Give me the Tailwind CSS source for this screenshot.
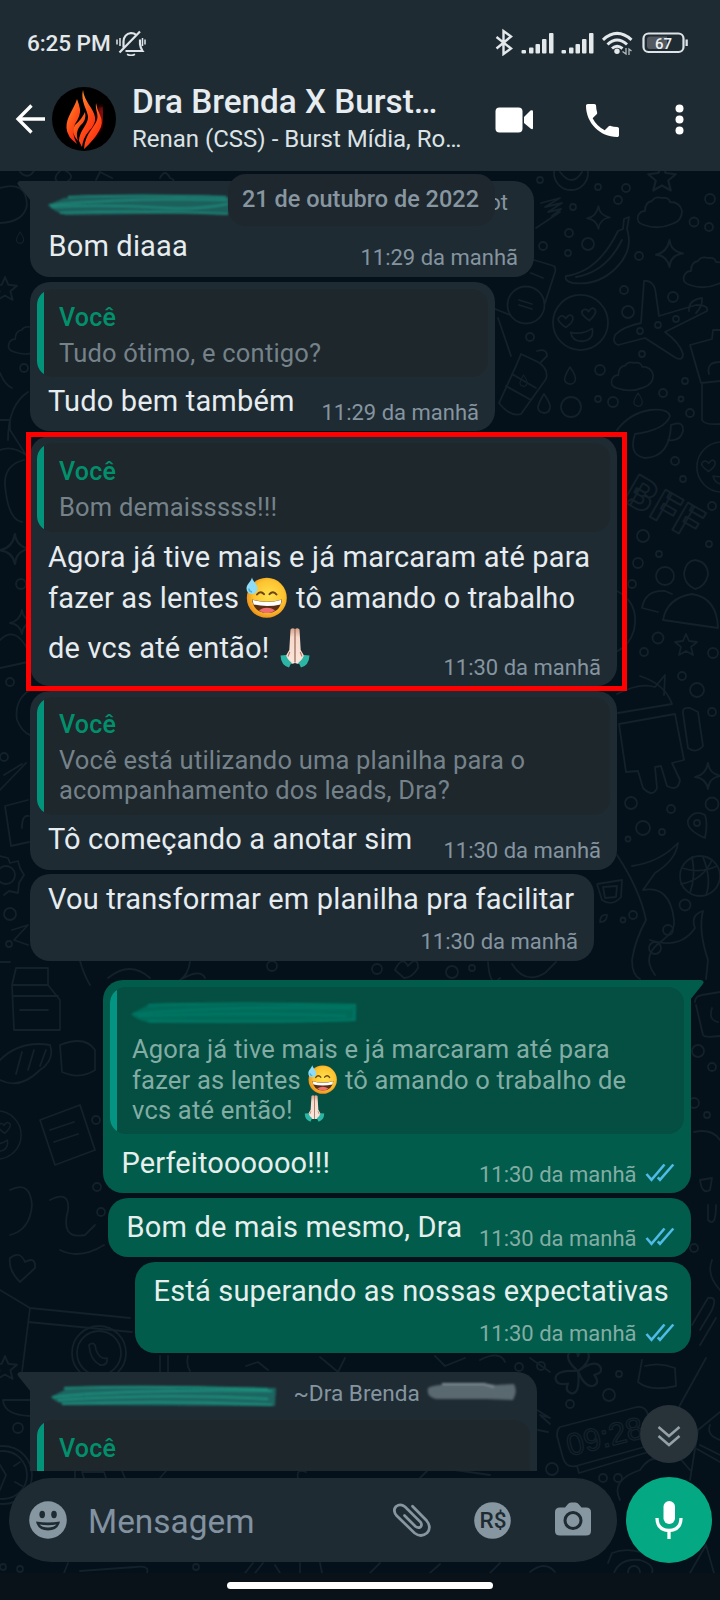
<!DOCTYPE html>
<html lang="pt">
<head>
<meta charset="utf-8">
<title>Dra Brenda X Burst</title>
<script src="https://cdn.jsdelivr.net/npm/@tailwindcss/browser@4"></script>
</head>
<body class="bg-[#0a1219]">
<svg class="absolute size-0">
  <defs>
    <radialGradient id="skin" cx=".55" cy=".45" r=".55"><stop offset="0" stop-color="#ffe14f"/><stop offset=".7" stop-color="#fdc32f"/><stop offset="1" stop-color="#f0951d"/></radialGradient>
    <linearGradient id="hand" x1="0" x2="0" y1="0" y2="1"><stop offset="0" stop-color="#d9a28c"/><stop offset=".25" stop-color="#f6d9ca"/><stop offset="1" stop-color="#fbe6dc"/></linearGradient>
    <symbol id="sweat" viewBox="0 0 41 41">
      <circle cx="20.8" cy="20.8" r="20" fill="url(#skin)"/>
      <path d="M6 22.5Q21 27 36 22.5Q34 36 21 36Q8 36 6 22.5Z" fill="#5b2f14"/>
      <path d="M6.5 22.8Q21 27.2 35.5 22.8L34.6 27.5Q21 30.5 7.6 27.5Z" fill="#fff"/>
      <path d="M13 33.2Q21 28.5 29 33.2Q26 36 21 36Q16 36 13 33.2Z" fill="#ef6f70"/>
      <path d="M11 17.5Q14.500 13 18 17.200M23.500 17.200Q27 13 30.500 17.500" fill="none" stroke="#6b4314" stroke-width="2" stroke-linecap="round"/>
      <path d="M6 0.500C7 5 11.500 7 11.500 11.500A5.500 5.500 0 0 1 0.500 11.500C0.500 7 5 5 6 0.500Z" fill="#8fdcf6"/>
      <path d="M3 11.500A3.500 3.500 0 0 0 6 15" stroke="#4aaede" stroke-width="1.500" fill="none"/>
    </symbol>
    <symbol id="pray" viewBox="0 0 30 40">
      <path d="M10.500 1.500Q12.500-.5 14.800 1V35Q11 37 7.500 33L5.500 28.500L9.300 22Z" fill="url(#hand)"/>
      <path d="M19.500 1.500Q17.500-.5 15.200 1V35Q19 37 22.500 33L24.500 28.500L20.700 22Z" fill="url(#hand)"/>
      <path d="M15 1.500V34M9.800 24L8 28.500M20.200 24L22 28.500" stroke="#b27964" stroke-width="1.100" fill="none"/>
      <path d="M.5 27.500L6 27Q7.500 32 11.500 34.500L9 39.500Q1 37.500 .5 27.500Z" fill="#2cb5a4"/>
      <path d="M29.500 27.500L24 27Q22.500 32 18.500 34.500L21 39.500Q29 37.500 29.500 27.500Z" fill="#2cb5a4"/>
    </symbol>
    <symbol id="ticks" viewBox="0 0 30 19"><path d="M1.500 11L6.500 16.800L19.500 1.500M12.800 14.300L15 16.800L28.300 1.500" fill="none" stroke="#4fbbe6" stroke-width="2.600"/></symbol>
    <filter id="soft" x="-5%" y="-30%" width="110%" height="160%"><feGaussianBlur stdDeviation="1.300"/></filter>
    <symbol id="cloud" viewBox="0 0 48 34" overflow="visible"><path d="M8 29Q0 27 2 20Q4 15 9 15Q9 6 16 5Q19 0 26 2Q33 1 34 6Q44 6 46 15Q46 25 36 28Q22 34 8 29Z"/></symbol>
    <symbol id="spark" viewBox="0 0 24 24" overflow="visible"><path d="M12 0Q13 10 24 12Q13 13 12 24Q10 14 0 13Q10 11 12 0Z"/></symbol>
    <symbol id="star" viewBox="0 0 24 24" overflow="visible"><path d="M12 1L15 8L23 9L17 14L19 22L12 18L5 22L7 14L1 9L9 8Z"/></symbol>
    <symbol id="drop" viewBox="0 0 14 20" overflow="visible"><path d="M7 0Q14 10 13 14Q12 19 7 19Q1 18 1 13Q2 8 7 0Z"/></symbol>
    <symbol id="love" viewBox="0 0 58 58" overflow="visible"><circle cx="29" cy="29" r="28"/><path d="M14 34Q4 27 7 24Q11 20 14 25Q18 19 21 23Q23 28 14 34ZM38 27Q28 20 31 17Q35 14 37 18Q41 12 44 16Q46 20 38 27ZM19 39Q31 42 41 35Q43 46 32 48Q21 49 19 39Z"/></symbol>
    <symbol id="flower" viewBox="0 0 40 40" overflow="visible"><path d="M20 20Q8 10 14 4Q19 2 20 8Q23 0 28 5Q31 12 20 20Q34 10 38 17Q40 22 33 23Q38 30 32 32Q25 33 20 20Q22 38 15 38Q9 36 12 30Q3 32 2 26Q2 19 20 20"/></symbol>
  </defs>
</svg>

<div class="w-[720px] h-[1600px] flex flex-col overflow-hidden bg-[#0a1219] font-[Roboto,sans-serif]">

  <!-- status bar and chat header -->
  <header class="h-[171px] shrink-0 bg-[#1f2b33] flex flex-col">
    <div class="h-[78px] pt-[28px] pl-[27px] pr-[32px] flex items-start">
      <span class="text-[22.6px] leading-[30px] mt-[1px] font-medium text-[#e3e8eb] whitespace-nowrap tracking-[-0.1px]">6:25 PM</span>
      <svg class="ml-[5px] mt-[2px]" width="30" height="26" viewBox="0 0 30 26" fill="none" stroke="#dfe5e8" stroke-width="2.200">
        <path d="M7.500 17.500V11.500Q8 4 15 3Q18 3 20.500 5M24 9.500V14Q24.500 18 26.500 21H9.500M3.500 22.500L24 1.500"/><path d="M11 24.300Q15 26.500 19 24.300" stroke-width="1.800"/><path d="M1 9.500V14.500M4 8V16M26.500 8V16M29 9.500V14.500" stroke-width="1.500"/>
      </svg>
      <svg class="ml-auto" width="194" height="28" viewBox="494 28 194 28">
        <path d="M496.500 37L511 48.500L503.500 54V31L511 36.500L496.500 48.500" fill="none" stroke="#e3e8eb" stroke-width="2.400"/>
        <g fill="#e3e8eb"><rect x="521.500" y="50" width="4.500" height="3.500" rx="1"/><rect x="529" y="47.500" width="4.500" height="6" rx="1"/><rect x="535.500" y="44" width="4.500" height="9.500" rx="1"/><rect x="542" y="39" width="4.500" height="14.500" rx="1"/><rect x="549" y="33" width="4.500" height="20.500" rx="1"/></g>
        <g fill="#e3e8eb"><rect x="561.500" y="50" width="4.500" height="3.500" rx="1"/><rect x="569" y="47.500" width="4.500" height="6" rx="1"/><rect x="575.500" y="44" width="4.500" height="9.500" rx="1"/><rect x="582" y="39" width="4.500" height="14.500" rx="1"/><rect x="589" y="33" width="4.500" height="20.500" rx="1"/></g>
        <g fill="none" stroke="#e3e8eb" stroke-width="3"><path d="M603 39.800Q617 27 631.500 39.800M607.500 44.500Q617 35.500 627 44.500M612 48.500Q617 44 622.500 48.500"/></g>
        <circle cx="617" cy="51.300" r="2.700" fill="#e3e8eb"/><path d="M626 48V54L622.500 51.500M629 55V49L631.500 51" fill="none" stroke="#b5bdc2" stroke-width="1.300"/>
        <rect x="643.500" y="33.500" width="40" height="18.500" rx="5" fill="none" stroke="#dde3e6" stroke-width="2.200"/>
        <path d="M650 36.500H667V49H650Q647 49 647 46V39.500Q647 36.500 650 36.500Z" fill="#53595f"/><rect x="685.500" y="39.500" width="2.300" height="6.500" fill="#dde3e6"/>
        <text x="655" y="48.600" font-size="15.500" font-weight="500" fill="#eef1f3" textLength="17" lengthAdjust="spacingAndGlyphs">67</text>
      </svg>
    </div>
    <div class="h-[84px] flex items-center pl-[15px] relative">
      <svg width="31" height="30" viewBox="0 0 31 30" fill="none" stroke="#fff" stroke-width="3.300" class="mt-[-2px]"><path d="M30 15H3M16.500 1.500L3 15L16.500 28.500"/></svg>
      <svg class="ml-[6px] mt-[-2px]" width="64" height="64" viewBox="0 0 64 64">
        <defs><linearGradient id="fl" x1=".2" y1="0" x2=".8" y2="1"><stop offset="0" stop-color="#ff8a2a"/><stop offset=".55" stop-color="#ff4a16"/><stop offset="1" stop-color="#ff1d12"/></linearGradient><filter id="glow"><feGaussianBlur stdDeviation="2"/></filter></defs>
        <circle cx="32" cy="32" r="32" fill="#000"/>
        <path d="M49 20Q51 30 46 40L38 50" stroke="#b30b08" stroke-width="5" fill="none" filter="url(#glow)"/>
        <g fill="url(#fl)"><path d="M25 12C22 22 14 30 14.500 41Q15 50 25 57Q19 46 23 37Q29 28 28 22Q27 17 25 12Z"/><path d="M31 3C28 14 36 24 36 30C36 38 27 44 27 54L30 60Q31 51 37 44Q44 37 43 30C42 22 32 14 31 3Z"/><path d="M44 16C43 24 47 27 45 33C42 41 33 47 32 62Q42 53 47 44Q52 36 48 28Q45 22 44 16Z"/><path d="M33 25Q35 33 28 39Q23 45 26 54Q18 45 23 38Q30 32 33 25Z"/></g>
      </svg>
      <div class="ml-[16px] flex flex-col w-[340px] mt-[1px]">
        <span class="text-[33.3px] leading-[36px] font-medium text-[#e6ecef] whitespace-nowrap">Dra Brenda X Burst…</span>
        <span class="text-[24px] leading-[36px] mt-[1px] text-[#dce3e6] whitespace-nowrap">Renan (CSS) - Burst Mídia, Ro…</span>
      </div>
      <svg class="absolute left-[495px] top-[26px]" width="38" height="29" viewBox="0 0 38 29" fill="#fff"><rect x=".5" y="3.500" width="27" height="25" rx="4"/><path d="M29 13L35.500 6.500Q38 5.500 38 7.500V24Q38 26 35.500 24.500L29 19Z"/></svg>
      <svg class="absolute left-[586px] top-[26px]" width="33" height="33" viewBox="3 3 18 18" fill="#fff"><path d="M6.620 10.790c1.440 2.830 3.760 5.140 6.590 6.590l2.200-2.200c.27-.27.67-.36 1.020-.24 1.120.37 2.330.57 3.570.57.55 0 1 .45 1 1V20c0 .55-.45 1-1 1-9.390 0-17-7.610-17-17 0-.55.45-1 1-1h3.500c.55 0 1 .45 1 1 0 1.250.2 2.450.57 3.570.11.35.03.74-.25 1.020l-2.200 2.200z"/></svg>
      <svg class="absolute left-[674px] top-[26px]" width="11" height="32" viewBox="0 0 11 32" fill="#fff"><circle cx="5.500" cy="4.500" r="4"/><circle cx="5.500" cy="15.500" r="4"/><circle cx="5.500" cy="26.500" r="4"/></svg>
    </div>
  </header>

  <main class="relative h-[1402px] shrink-0 flex flex-col bg-[#05111a]">
    <!-- doodle wallpaper -->
    <svg class="absolute inset-0" width="720" height="1402" viewBox="0 171 720 1402" fill="none" stroke="#13212a" stroke-width="1.800" stroke-linejoin="round" stroke-linecap="round">
      <path d="M541 203L560 198L545 207L562 203L548 212L561 209L552 216M536 228L560 212"/>
      <use href="#spark" x="587" y="206" width="23" height="23"/><circle cx="571" cy="173" r="17"/><path d="M560 172Q572 188 582 172"/>
      <use href="#star" x="647" y="163" width="30" height="30"/><use href="#cloud" x="636" y="196" width="48" height="34"/>
      <use href="#spark" x="656" y="240" width="27" height="27"/><use href="#cloud" x="682" y="256" width="48" height="34"/>
      <path d="M566 276Q598 272 618 231L623 229L624 219L629 217L627 229Q634 250 616 268Q598 286 573 283Q564 281 566 276ZM576 277Q606 272 622 240"/>
      <path d="M534 260L554 266Q556 268 555 272L545 303M531 273L543 278M510 315L495 309M511 356L498 318"/><circle cx="526" cy="305" r="18.500"/><path d="M519 300L532 304M519 305L532 309"/>
      <use href="#love" x="552" y="294" width="57" height="57"/>
      <path d="M644 281Q655 280 656 295L659 316L696 305Q709 305 707 311L665 332Q680 343 683 354Q683 361 676 358L645 338L618 345Q612 343 615 335Q622 327 641 323ZM689 311Q688 300 702 298Q703 306 696 313"/>
      <path d="M521 354L538 362Q549 369 546 379L521 414Q510 417 499 403L516 366ZM537 351Q547 348 547 356L541 362M512 374L536 388M506 386L531 400"/><use href="#drop" x="519" y="375" width="9" height="12"/>
      <use href="#drop" x="563" y="367" width="14" height="18" /><use href="#drop" x="537" y="394" width="14" height="20"/><circle cx="571" cy="407" r="10"/>
      <use href="#cloud" x="609" y="361" width="47" height="32"/><use href="#drop" x="633" y="393" width="10" height="14"/>
      <path d="M720 330L713 330L712 339L690 345L701 383L720 381M702 383V420Q704 425 720 424M709 374Q706 362 720 362"/>
      <path d="M617 430Q630 413 650 410Q668 408 670 416Q665 430 635 434Q628 455 645 458Q670 457 671 425M671 425Q684 420 683 431Q680 442 668 440"/>
      <use href="#love" x="696" y="441" width="52" height="52"/>
      <g font-family="Roboto" font-weight="900" font-size="44" transform="rotate(30 625 500)"><text x="622" y="502" letter-spacing="2">BFF</text></g>
      <circle cx="665" cy="576" r="9"/><path d="M695 560Q708 562 708 575Q705 587 695 589Q684 584 684 573Q686 561 695 560ZM663 620Q667 598 692 594Q717 598 718 628ZM658 612L642 608Q645 590 665 591L672 594M615 590Q640 602 634 630Q630 645 616 652"/>
      <use href="#star" x="674" y="633" width="24" height="24"/><path d="M617 694Q640 682 655 687L665 675L664 695"/>
      <path d="M619 724L675 714L684 760L672 763L680 780Q678 792 667 786L661 766L655 767L657 788Q653 798 643 788L638 771L626 772ZM618 713L672 704Q665 684 640 676M683 713Q682 707 690 708L698 712L703 746Q696 754 688 748Z"/>
      <use href="#spark" x="695" y="762" width="26" height="28"/><path d="M705 838Q686 830 688 820Q694 809 705 815Q708 823 705 838Z"/><circle cx="697" cy="823" r="3"/>
      <circle cx="700" cy="876" r="20"/><path d="M682 868Q700 874 717 866M690 893Q696 876 692 857M681 884Q703 880 712 860M706 895Q712 880 703 857"/>
      <path d="M617 855Q640 890 646 920Q635 940 632 960Q632 975 640 979M632 866Q660 862 678 843Q676 860 655 873L643 890Q670 885 674 920Q676 930 663 940Q640 955 655 975M650 940Q680 950 695 928Q690 915 703 911Q698 930 708 960L706 979"/><circle cx="668" cy="930" r="5"/><circle cx="655" cy="948" r="6"/>
      <path d="M597 884L622 880L621 897Q612 907 602 900ZM603 887L617 886L616 897L605 898Z"/><path d="M600 922Q600 914 607 915Q607 922 600 922"/>
      <path d="M488 962Q490 990 500 978M512 964Q525 985 545 973L556 962M395 970Q402 955 408 966Q418 955 418 968Q412 978 404 978Z"/>
      <!-- left edge -->
      <path d="M0 188Q26 180 27 205Q24 222 0 223"/><use href="#drop" x="15" y="232" width="10" height="12"/><use href="#star" x="-8" y="276" width="26" height="26"/><use href="#cloud" x="7" y="325" width="44" height="32"/>
      <path d="M28 392Q8 405 8 440M0 373Q5 385 12 388M0 420L10 420V430M10 430L26 455M24 460Q4 465 5 485Q8 520 22 522M26 455Q12 445 0 450"/>
      <use href="#spark" x="0" y="532" width="30" height="34"/><use href="#spark" x="10" y="610" width="24" height="24"/><path d="M0 640Q15 625 28 650M0 668L28 662M30 690Q14 700 17 720Q22 732 30 735M0 790L26 763M4 775L22 764M28 800L5 806L11 846L29 842M22 828Q22 814 29 816"/>
      <circle cx="6" cy="875" r="9"/><path d="M0 856L8 858L10 863L18 861L20 868L24 875L19 883L18 893L9 891L4 895"/><path d="M12 930L28 925L14 940L28 945M0 962L10 962M80 961Q84 975 90 985M108 978Q130 960 150 978M190 962Q188 975 180 980Q200 968 205 978"/>
      <path d="M12 985L16 968H48V985M12 985H48L60 1000V1030H14ZM14 996H58M20 1010H48M60 1045Q85 1035 95 1050V1070Q80 1080 62 1072ZM0 1060Q20 1040 50 1045Q55 1060 40 1070Q20 1090 0 1080M46 1050L40 1066M34 1050L28 1070M22 1052L16 1074"/>
      <path d="M40 1120L80 1105L95 1150L55 1165ZM50 1130L74 1122M54 1142L78 1134"/><use href="#love" x="-28" y="1110" width="50" height="50"/>
      <path d="M10 1190Q30 1180 32 1205Q30 1230 10 1235M50 1200Q70 1190 68 1210Q60 1240 85 1235L95 1225M60 1250Q80 1260 104 1245M10 1258Q20 1250 25 1262Q36 1256 35 1268L20 1282Q8 1270 10 1258"/>
      <path d="M30 1308L130 1318M28 1322L132 1332M30 1308L22 1372M0 1290L30 1308"/><circle cx="99" cy="1353" r="27"/><circle cx="99" cy="1353" r="22"/><path d="M89 1345Q95 1340 96 1350Q100 1360 107 1358Q108 1366 100 1365Q90 1360 89 1345"/>
      <path d="M160 1356V1372M168 1356V1372M188 1356Q186 1365 190 1371M246 1366L258 1362L268 1370M320 1357L338 1372L345 1358"/><use href="#star" x="-8" y="1355" width="26" height="26"/><path d="M3 1400H30M3 1400Q4 1415 30 1416"/>
      <circle cx="3" cy="1475" r="29"/><circle cx="3" cy="1475" r="24"/><path d="M0 1465L6 1475L0 1490M20 1462L14 1466M22 1486L15 1482"/>
      <!-- lower gap and right strip -->
      <path d="M75 1478V1471M84 1478L82 1472H104L106 1478M125 1478L122 1471M160 1478L166 1471M298 1478Q296 1468 306 1472M420 1478L428 1470H455L490 1475"/>
      <path d="M80 1571L135 1567Q150 1565 147 1573M68 1563L64 1573M245 1573L253 1563M255 1573L263 1563M275 1565L280 1573M300 1563V1573M320 1563L322 1573M370 1573L380 1563M430 1573L440 1564M500 1563L490 1573M530 1572Q545 1560 555 1572"/>
      <path d="M695 1002Q695 996 702 995L720 992M696 1005L703 1035Q705 1038 720 1036M712 1008Q708 1020 718 1022M694 1132Q712 1128 720 1140M700 1180L712 1178L710 1190Q702 1195 700 1180M708 1205V1220Q716 1228 716 1205M712 1260Q706 1275 720 1290M692 1325L708 1298Q718 1296 712 1310L700 1330M700 1345L716 1318"/>
      <path d="M435 1356L445 1366L465 1358M480 1360Q500 1350 505 1362M530 1358L550 1372"/>
      <use href="#flower" x="552" y="1346" width="52" height="50"/><path d="M642 1360L638 1382Q650 1392 676 1386L675 1368Q660 1362 645 1366M706 1358L680 1405L664 1440L690 1470M720 1412L698 1430L690 1480M697 1449L720 1462M700 1445L720 1455M710 1425Q706 1435 720 1440"/>
      <path d="M560 1427L637 1407Q646 1406 648 1415L655 1444L576 1466Q566 1468 563 1458L557 1436Q557 1429 560 1427ZM577 1466L579 1473L655 1450L654 1444"/>
      <g font-family="Liberation Sans" font-size="31" transform="rotate(-14 605 1437)" stroke-width="1.300"><text x="566" y="1447" textLength="78">09:28</text></g>
      <path d="M537 1410L550 1418L540 1415L550 1424M538 1430L548 1432M620 1500Q610 1480 640 1470Q650 1455 660 1460"/>
      <path d="M608 1563L612 1553Q625 1548 640 1552L655 1560M614 1573Q620 1558 640 1560Q655 1565 652 1573M690 1573L706 1545L714 1573"/><circle cx="634" cy="1572" r="6"/>
      <path d="M20 172Q28 180 34 171M60 171Q50 180 62 184Q78 178 66 171M96 180L100 172L112 178M160 178Q165 168 170 178Q176 180 172 182"/>
      <g><circle cx="540" cy="180" r="3"/><circle cx="598" cy="187" r="3"/><circle cx="626" cy="188" r="4"/><circle cx="618" cy="200" r="4"/><circle cx="573" cy="207" r="3"/><circle cx="569" cy="233" r="4"/><circle cx="543" cy="246" r="4"/><circle cx="588" cy="244" r="6"/><circle cx="568" cy="253" r="3"/><circle cx="694" cy="222" r="4.500"/><circle cx="709" cy="227" r="4"/><circle cx="710" cy="199" r="5"/><circle cx="639" cy="256" r="4"/><circle cx="624" cy="290" r="4"/><circle cx="628" cy="312" r="6"/><circle cx="673" cy="297" r="5"/><circle cx="530" cy="337" r="4"/><circle cx="640" cy="331" r="3"/><circle cx="658" cy="325" r="3"/><circle cx="676" cy="319" r="3"/><circle cx="642" cy="354" r="3"/><circle cx="600" cy="370" r="5"/><circle cx="613" cy="402" r="5"/><circle cx="598" cy="399" r="3"/><circle cx="663" cy="393" r="4"/><circle cx="685" cy="381" r="3"/><circle cx="681" cy="399" r="2.500"/><circle cx="690" cy="413" r="4"/><circle cx="675" cy="461" r="4"/><circle cx="683" cy="479" r="3"/><circle cx="712" cy="506" r="4"/><circle cx="643" cy="536" r="6"/><circle cx="709" cy="544" r="3"/><circle cx="659" cy="554" r="3"/><circle cx="638" cy="563" r="5"/><circle cx="632" cy="584" r="4"/><circle cx="658" cy="638" r="5.500"/><circle cx="644" cy="652" r="4"/><circle cx="713" cy="653" r="5"/><circle cx="682" cy="676" r="4"/><circle cx="697" cy="690" r="7"/><circle cx="712" cy="712" r="4"/><circle cx="631" cy="803" r="6"/><circle cx="671" cy="809" r="4"/><circle cx="712" cy="804" r="6.500"/><circle cx="643" cy="828" r="7"/><circle cx="662" cy="832" r="3"/><circle cx="628" cy="839" r="2.500"/><circle cx="685" cy="905" r="5.500"/><circle cx="633" cy="915" r="4"/><circle cx="623" cy="920" r="2.500"/><circle cx="377" cy="969" r="5"/><circle cx="452" cy="972" r="6"/><circle cx="472" cy="968" r="3"/><circle cx="272" cy="966" r="5"/><circle cx="21" cy="584" r="5"/><circle cx="10" cy="682" r="4"/><circle cx="4" cy="757" r="4"/><circle cx="10" cy="914" r="6"/><circle cx="9" cy="944" r="3"/><circle cx="24" cy="368" r="4"/><circle cx="96" cy="1120" r="4"/><circle cx="97" cy="1187" r="4"/><circle cx="101" cy="1212" r="4"/><circle cx="698" cy="1051" r="6"/><circle cx="712" cy="1067" r="4"/><circle cx="694" cy="1103" r="5"/><circle cx="707" cy="1115" r="3"/><circle cx="694" cy="1248" r="4"/><circle cx="18" cy="1428" r="5"/><circle cx="609" cy="1395" r="6"/><circle cx="570" cy="1404" r="4"/><circle cx="619" cy="1374" r="3"/><circle cx="541" cy="1366" r="4"/><circle cx="519" cy="1367" r="4"/><circle cx="552" cy="1469" r="6"/><circle cx="603" cy="1478" r="4"/><circle cx="618" cy="1478" r="4"/><circle cx="196" cy="1567" r="3"/><circle cx="3" cy="1567" r="3"/><circle cx="20" cy="1569" r="3"/></g>
    </svg>

    <!-- messages -->
    <section class="relative h-[1299.5px] shrink-0 overflow-hidden flex flex-col items-start pt-[10px] pl-[29.5px] pr-[29.5px]">

      <article class="relative w-[504.500px] h-[96px] shrink-0 rounded-[20px] rounded-tl-none bg-[#1f2b33] pl-[19px] pr-[16px] flex flex-col">
        <svg class="absolute left-[-13px] top-0" width="14" height="22" viewBox="0 0 14 22" fill="#1f2b33"><path d="M14 0H3Q-1 1 1.500 4.500L14 20Z"/></svg>
        <div class="h-[48px] flex justify-between">
          <svg class="ml-[-3px] mt-[11px]" width="185" height="26" viewBox="0 0 185 26" filter="url(#soft)"><path d="M2 13L18 6Q100 2 183 5V21L20 23Q8 20 2 13Z" fill="#1a5f5b"/><path d="M3 13Q90 5 181 8M5 15Q60 12 120 16Q150 18 182 12M14 21Q100 18 182 22M22 5Q90 2 180 5" stroke="#1c8576" stroke-width="2" fill="none"/></svg>
          <span class="mt-[7px] mr-[10px] text-[22px] leading-[30px] text-[#8595a0]">ot</span>
        </div>
        <div class="flex justify-between">
          <span class="text-[29px] leading-[34px] tracking-[0.16px] text-[#e6ecef] whitespace-nowrap">Bom diaaa</span>
          <time class="mt-[16px] text-[22px] leading-[26px] text-[#8595a0] whitespace-nowrap">11:29 da manhã</time>
        </div>
      </article>

      <article class="mt-[4.500px] w-[465.500px] h-[149.500px] shrink-0 rounded-[20px] bg-[#1f2b33] p-[7px] flex flex-col">
        <blockquote class="h-[88.500px] shrink-0 rounded-[16px] overflow-hidden bg-[#1e272c] flex">
          <i class="w-[7.500px] bg-[#01947a]"></i>
          <div class="pl-[15px] pt-[11px] flex flex-col">
            <b class="text-[25px] leading-[36px] tracking-[0.2px] font-medium text-[#02906c]">Você</b>
            <p class="mt-[2px] text-[25.5px] leading-[30.500px] tracking-[0.2px] text-[#75828a] whitespace-nowrap">Tudo ótimo, e contigo?</p>
          </div>
        </blockquote>
        <div class="mt-[7px] pl-[11.500px] pr-[9px] flex justify-between">
          <span class="text-[29px] leading-[34px] tracking-[0.16px] text-[#e6ecef] whitespace-nowrap">Tudo bem também</span>
          <time class="mt-[16px] text-[22px] leading-[26px] text-[#8595a0] whitespace-nowrap">11:29 da manhã</time>
        </div>
      </article>

      <article class="mt-[5px] w-[587.500px] h-[250px] shrink-0 rounded-[20px] bg-[#1f2b33] p-[7px] flex flex-col">
        <blockquote class="h-[89px] shrink-0 rounded-[16px] overflow-hidden bg-[#1e272c] flex">
          <i class="w-[7.500px] bg-[#01947a]"></i>
          <div class="pl-[15px] pt-[11px] flex flex-col">
            <b class="text-[25px] leading-[36px] tracking-[0.2px] font-medium text-[#02906c]">Você</b>
            <p class="mt-[2px] text-[25.5px] leading-[30.500px] tracking-[0.2px] text-[#75828a] whitespace-nowrap">Bom demaisssss!!!</p>
          </div>
        </blockquote>
        <div class="mt-[7.500px] pl-[11.500px] pr-[9px] flex flex-col text-[29px] leading-[34px] tracking-[0.16px] text-[#e6ecef] whitespace-nowrap">
          <p class="h-[41.500px] tracking-[0.2px]">Agora já tive mais e já marcaram até para</p>
          <p class="h-[49.500px] flex"><span>fazer as lentes</span><svg class="ml-[7px] mr-[9px] mt-[-4px]" width="41" height="41"><use href="#sweat"/></svg><span>tô amando o trabalho</span></p>
          <div class="flex justify-between"><p class="flex"><span>de vcs até então!</span><svg class="ml-[11px] mt-[-3px]" width="30" height="40"><use href="#pray"/></svg></p>
          <time class="mt-[24px] text-[22px] leading-[26px] tracking-normal text-[#8595a0]">11:30 da manhã</time></div>
        </div>
      </article>

      <article class="mt-[4.500px] w-[587.500px] h-[179.500px] shrink-0 rounded-[20px] bg-[#1f2b33] p-[7px] pt-[6px] flex flex-col">
        <blockquote class="h-[118.500px] shrink-0 rounded-[16px] overflow-hidden bg-[#1e272c] flex">
          <i class="w-[7.500px] bg-[#01947a]"></i>
          <div class="pl-[15px] pt-[10px] flex flex-col">
            <b class="text-[25px] leading-[36px] tracking-[0.2px] font-medium text-[#02906c]">Você</b>
            <p class="mt-[2px] text-[25.5px] leading-[30.500px] tracking-[0.2px] text-[#75828a] whitespace-nowrap">Você está utilizando uma planilha para o<br>acompanhamento dos leads, Dra?</p>
          </div>
        </blockquote>
        <div class="mt-[7px] pl-[11.500px] pr-[9px] flex justify-between">
          <span class="text-[29px] leading-[34px] tracking-[0.16px] text-[#e6ecef] whitespace-nowrap">Tô começando a anotar sim</span>
          <time class="mt-[16px] text-[22px] leading-[26px] text-[#8595a0] whitespace-nowrap">11:30 da manhã</time>
        </div>
      </article>

      <article class="mt-[4px] w-[564.500px] h-[87px] shrink-0 rounded-[20px] bg-[#1f2b33] pl-[18.500px] pr-[16px] pt-[7.500px] flex flex-col">
        <span class="text-[29px] leading-[34px] tracking-[0.16px] text-[#e6ecef] whitespace-nowrap">Vou transformar em planilha pra facilitar</span>
        <time class="mt-[13px] self-end text-[22px] leading-[26px] text-[#8595a0] whitespace-nowrap">11:30 da manhã</time>
      </article>

      <article class="relative self-end mt-[19px] w-[588px] h-[213px] shrink-0 rounded-[20px] rounded-tr-none bg-[#025c4b] p-[7px] flex flex-col">
        <svg class="absolute right-[-13px] top-0" width="14" height="22" viewBox="0 0 14 22" fill="#025c4b"><path d="M0 0H11Q15 1 12.500 4.500L0 20Z"/></svg>
        <blockquote class="h-[147px] shrink-0 rounded-[16px] overflow-hidden bg-[#044f42] flex">
          <i class="w-[7.500px] bg-[#049483]"></i>
          <div class="pl-[15px] flex flex-col">
            <svg class="ml-[-4px] mt-[13px]" width="232" height="26" viewBox="0 0 232 26" filter="url(#soft)"><path d="M3 14L20 5H228V21L22 23Q8 20 3 14Z" fill="#046a59"/><path d="M5 14Q90 6 224 8M20 5Q100 2 227 5L226 20Q150 23 20 21M10 16Q120 12 218 16" stroke="#067866" stroke-width="2" fill="none"/></svg>
            <p class="mt-[8px] text-[25.5px] leading-[30.500px] tracking-[0.2px] text-[#83ada4] whitespace-nowrap">Agora já tive mais e já marcaram até para</p>
            <p class="flex text-[25.5px] leading-[30.500px] tracking-[0.2px] text-[#83ada4] whitespace-nowrap"><span>fazer as lentes</span><svg class="ml-[7px] mr-[8px]" width="29" height="29"><use href="#sweat"/></svg><span>tô amando o trabalho de</span></p>
            <p class="flex text-[25.5px] leading-[30.500px] tracking-[0.2px] text-[#83ada4] whitespace-nowrap"><span>vcs até então!</span><svg class="ml-[11px]" width="21" height="27"><use href="#pray"/></svg></p>
          </div>
        </blockquote>
        <div class="mt-[11.500px] pl-[12px] pr-[9px] flex">
          <span class="text-[29px] leading-[34px] tracking-[0.12px] text-[#e6efed] whitespace-nowrap">Perfeitoooooo!!!</span>
          <time class="ml-auto mt-[16.500px] text-[22px] leading-[26px] text-[#83ada4] whitespace-nowrap">11:30 da manhã</time>
          <svg class="ml-[8px] mt-[17.500px]" width="30" height="19"><use href="#ticks"/></svg>
        </div>
      </article>

      <article class="self-end mt-[5px] w-[583px] h-[59px] shrink-0 rounded-[20px] bg-[#025c4b] pl-[19px] pr-[16px] pt-[11.500px] flex">
        <span class="text-[29px] leading-[34px] tracking-[0.2px] text-[#e6efed] whitespace-nowrap">Bom de mais mesmo, Dra</span>
        <time class="ml-auto mt-[16px] text-[22px] leading-[26px] text-[#83ada4] whitespace-nowrap">11:30 da manhã</time>
        <svg class="ml-[8px] mt-[17.500px] shrink-0" width="30" height="19"><use href="#ticks"/></svg>
      </article>

      <article class="self-end mt-[5px] w-[556px] h-[91px] shrink-0 rounded-[20px] bg-[#025c4b] pl-[19px] pr-[16px] pt-[11.500px] flex flex-col">
        <span class="text-[29px] leading-[34px] tracking-[0.17px] text-[#e6efed] whitespace-nowrap">Está superando as nossas expectativas</span>
        <div class="mt-[13.500px] flex justify-end">
          <time class="text-[22px] leading-[26px] text-[#83ada4] whitespace-nowrap">11:30 da manhã</time>
          <svg class="ml-[8px] mt-[1.500px]" width="30" height="19"><use href="#ticks"/></svg>
        </div>
      </article>

      <article class="relative mt-[19px] w-[507.500px] h-[160px] shrink-0 rounded-[20px] rounded-tl-none bg-[#1f2b33] p-[7px] flex flex-col">
        <svg class="absolute left-[-13px] top-0" width="14" height="22" viewBox="0 0 14 22" fill="#1f2b33"><path d="M14 0H3Q-1 1 1.500 4.500L14 20Z"/></svg>
        <div class="h-[40.500px] shrink-0 pl-[11px] flex">
          <svg class="mt-[4px]" width="232" height="26" viewBox="0 0 232 26" filter="url(#soft)"><path d="M3 14L18 6Q120 2 228 5L227 23L20 22Q8 20 3 14Z" fill="#1a6560"/><path d="M4 14Q90 6 224 8M16 5Q100 2 220 6M10 17Q120 10 220 16M14 21Q120 17 224 22" stroke="#1b8d7c" stroke-width="2" fill="none"/></svg>
          <span class="ml-[14px] text-[22.6px] leading-[30px] text-[#8595a0] whitespace-nowrap">~Dra Brenda</span>
          <svg class="ml-[6px] mt-[1px]" width="92" height="24" viewBox="0 0 92 24" filter="url(#soft)"><path d="M2 8Q10 3 55 3L70 5L88 4Q92 12 87 20L60 19L10 19Q0 17 2 8Z" fill="#5a6870"/><path d="M16 4H58L68 7" stroke="#7d8a90" stroke-width="2" fill="none"/></svg>
        </div>
        <blockquote class="h-[118px] shrink-0 rounded-[16px] overflow-hidden bg-[#1e272c] flex">
          <i class="w-[7.500px] bg-[#01947a]"></i>
          <div class="pl-[15px] pt-[11px]"><b class="text-[25px] leading-[36px] tracking-[0.2px] font-medium text-[#02906c]">Você</b></div>
        </blockquote>
      </article>
    </section>

    <!-- floating date -->
    <div class="absolute left-[228px] top-[3px] w-[267px] h-[52px] rounded-[18px] bg-[#1d272d] flex justify-center items-center">
      <span class="text-[23.5px] leading-[30px] mt-[-3px] ml-[-2px] font-medium text-[#8796a0] whitespace-nowrap">21 de outubro de 2022</span>
    </div>
    <!-- highlight frame -->
    <div class="absolute left-[26px] top-[261px] w-[601px] h-[258.500px] border-[5px] border-[#ff0000]"></div>
    <!-- jump to latest -->
    <div class="absolute left-[639.500px] top-[1233.500px] size-[58px] rounded-full bg-[#273239] flex items-center justify-center">
      <svg width="24" height="22" viewBox="0 0 24 22" fill="none" stroke="#95a1a8" stroke-width="2.500" class="mt-[5px]"><path d="M1.500 2L12 11L22.500 2M1.500 11L12 20L22.500 11"/></svg>
    </div>

    <!-- composer -->
    <footer class="relative mt-[6.500px] pl-[9px] flex items-center">
      <div class="w-[608px] h-[84px] rounded-full bg-[#1f2b33] flex items-center pl-[20px] pr-[26.500px]">
        <svg width="38" height="38" viewBox="0 0 38 38"><circle cx="19" cy="19" r="18.800" fill="#8797a1"/><g fill="#1f2b33"><ellipse cx="13.200" cy="13.500" rx="2.800" ry="3.700"/><ellipse cx="25" cy="13.500" rx="2.800" ry="3.700"/><path d="M7 20.500Q19 22.500 31 20.500Q29 29.500 19 29.500Q9 29.500 7 20.500Z"/></g><path d="M10.500 23.500Q19 25 27.500 23.500Q25 26.500 19 26.500Q13 26.500 10.500 23.500Z" fill="#8797a1"/></svg>
        <span class="ml-[21px] text-[33.4px] leading-[40px] mt-[3px] text-[#8292a0] whitespace-nowrap">Mensagem</span>
        <svg class="ml-auto" width="38" height="35" viewBox="0 0 38 35" fill="none" stroke="#8797a1" stroke-width="2.700" stroke-linecap="round"><path d="M19.500 3.200L33.500 17.500Q39 24.500 34 30Q28 35 21.500 30L3.500 12.500Q-.5 7.500 3 3.500Q7.500 0 12 3.800L27.500 19Q29.500 22 27.500 24Q25 25.500 22.500 23.500L11.500 12.500"/></svg>
        <svg class="ml-[43px]" width="37" height="37" viewBox="0 0 37 37"><circle cx="18.500" cy="18.500" r="18.300" fill="#8797a1"/><text x="5.500" y="26" font-size="21.500" font-weight="500" fill="#1f2b33" textLength="27" lengthAdjust="spacingAndGlyphs">R$</text></svg>
        <svg class="ml-[44px] mt-[-3px]" width="36" height="34" viewBox="0 0 36 34"><path d="M5 5.500H10L13 2Q14 .5 16 .5H20.500Q22.500 .5 23.500 2L26.500 5.500H31Q36 5.500 36 10V29Q36 33.500 31 33.500H5Q0 33.500 0 29V10Q0 5.500 5 5.500Z" fill="#8797a1"/><circle cx="18" cy="18.500" r="8" fill="none" stroke="#1f2b33" stroke-width="3"/></svg>
      </div>
      <div class="ml-[9px] size-[86px] rounded-full bg-[#04a984] flex items-center justify-center">
        <svg width="28" height="38" viewBox="0 0 28 38"><rect x="8.500" y="0" width="11.500" height="23" rx="5.700" fill="#fff"/><path d="M2 17Q2 29 14 29.500Q26 29 26 17M14 29V38" fill="none" stroke="#fff" stroke-width="3.300"/></svg>
      </div>
    </footer>
  </main>
  <div class="mt-[9px] ml-[226.500px] w-[266.500px] h-[7px] shrink-0 rounded-full bg-white"></div>
</div>
</body>
</html>
